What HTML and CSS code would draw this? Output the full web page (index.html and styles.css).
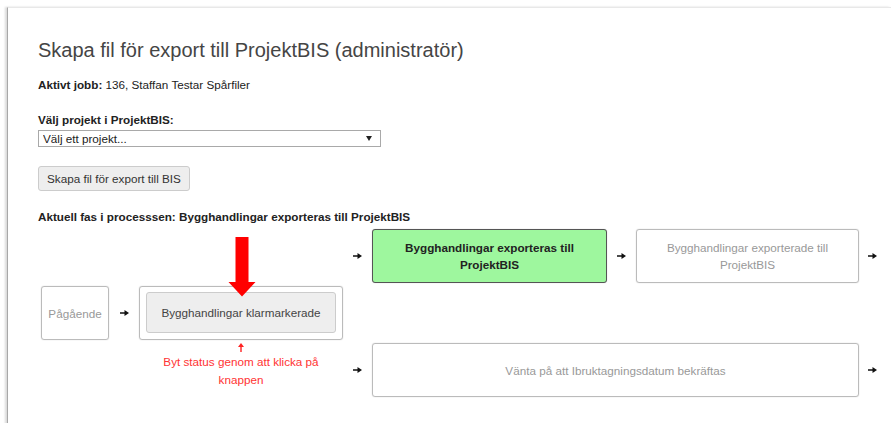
FILE: index.html
```html
<!DOCTYPE html>
<html lang="sv">
<head>
  <meta charset="UTF-8">
  <title>Skapa fil för export till ProjektBIS</title>
  <link rel="stylesheet" href="styles.css">
</head>
<body>
  <div class="frame">
    <h1>Skapa fil för export till ProjektBIS (administratör)</h1>

    <p class="job"><b>Aktivt jobb:</b> 136, Staffan Testar Spårfiler</p>

    <label class="lbl" for="projekt">Välj projekt i ProjektBIS:</label>
    <div class="select-wrap">
      <select id="projekt" class="sel">
        <option>Välj ett projekt...</option>
      </select>
    </div>

    <button type="button" class="bt">Skapa fil för export till BIS</button>

    <p class="phase">Aktuell fas i processsen: Bygghandlingar exporteras till ProjektBIS</p>

    <div class="flow">
      <div class="box start">Pågående</div>
      <div class="arr a1"><svg width="9" height="6" viewBox="0 0 9 6"><path d="M0 2.3h5v1.4H0z M4.5 0 9 3 4.5 6z" fill="#111"/></svg></div>
      <div class="mid">
        <svg class="bigarrow" width="28" height="60" viewBox="0 0 28 60"><path d="M7.5 0h13v45h7L14 59.5 0.5 45h7z" fill="#f00"/></svg>
        <button type="button" class="midbt">Bygghandlingar klarmarkerade</button>
      </div>
      <div class="hint">
        <svg width="6" height="9" viewBox="0 0 6 9"><path d="M3 0 6 4H3.7v5H2.3V4H0z" fill="#f22"/></svg>
        <span>Byt status genom att klicka på<br>knappen</span>
      </div>

      <div class="arr a2"><svg width="9" height="6" viewBox="0 0 9 6"><path d="M0 2.3h5v1.4H0z M4.5 0 9 3 4.5 6z" fill="#111"/></svg></div>
      <div class="box current">Bygghandlingar exporteras till ProjektBIS</div>
      <div class="arr a3"><svg width="9" height="6" viewBox="0 0 9 6"><path d="M0 2.3h5v1.4H0z M4.5 0 9 3 4.5 6z" fill="#111"/></svg></div>
      <div class="box done">Bygghandlingar exporterade till ProjektBIS</div>
      <div class="arr a4"><svg width="9" height="6" viewBox="0 0 9 6"><path d="M0 2.3h5v1.4H0z M4.5 0 9 3 4.5 6z" fill="#111"/></svg></div>

      <div class="arr a5"><svg width="9" height="6" viewBox="0 0 9 6"><path d="M0 2.3h5v1.4H0z M4.5 0 9 3 4.5 6z" fill="#111"/></svg></div>
      <div class="box wait">Vänta på att Ibruktagningsdatum bekräftas</div>
      <div class="arr a6"><svg width="9" height="6" viewBox="0 0 9 6"><path d="M0 2.3h5v1.4H0z M4.5 0 9 3 4.5 6z" fill="#111"/></svg></div>
    </div>
  </div>
</body>
</html>
```

FILE: styles.css
```css
body {
  margin: 0;
  background: #fff;
  font-family: "Liberation Sans", Arial, sans-serif;
  font-size: 11.7px;
  color: #222;
  overflow: hidden;
}
.frame {
  margin: 7px 0 0 7px;
  height: 405px;
  padding: 30px 0 0 30px;
  border-left: 1px solid #a8a8a8;
  border-top: 1px solid #e8e8e8;
  border-bottom: 1px solid #eee;
  box-shadow: -2px 0 2px rgba(0, 0, 0, 0.15);
}
h1 {
  margin: 0;
  font-size: 20px;
  line-height: 24px;
  font-weight: normal;
  color: #454545;
}
.job {
  margin: 16px 0 0;
  line-height: 14px;
}
.lbl {
  display: block;
  margin-top: 21px;
  line-height: 14px;
  font-weight: bold;
}
.select-wrap {
  position: relative;
  width: 343px;
  margin-top: 3px;
}
.sel {
  -webkit-appearance: none;
  appearance: none;
  display: block;
  width: 343px;
  height: 17px;
  margin: 0;
  padding: 0 4px;
  border: 1px solid #a9a9a9;
  border-radius: 0;
  background: #fff;
  font-family: inherit;
  font-size: 11.7px;
  color: #222;
}
.select-wrap::after {
  content: "";
  position: absolute;
  right: 9px;
  top: 6px;
  border-left: 3px solid transparent;
  border-right: 3px solid transparent;
  border-top: 5px solid #222;
}
.bt {
  display: block;
  margin-top: 19px;
  width: 152px;
  height: 25px;
  padding: 0;
  background: #eee;
  border: 1px solid #ccc;
  border-radius: 3px;
  font-family: inherit;
  font-size: 11.7px;
  color: #333;
}
.phase {
  margin: 19px 0 0;
  line-height: 14px;
  font-weight: bold;
}
.flow {
  display: grid;
  grid-template-columns: 68px 30px 204px 29px 235px 29px 223px 27px;
  grid-template-rows: 54px 54px 54px;
  row-gap: 3px;
  margin: 5px 0 0 3px;
}
.arr {
  display: flex;
  align-items: center;
  justify-content: center;
}
.arr svg {
  display: block;
}
.a1 { grid-column: 2; grid-row: 2; }
.a2 { grid-column: 4; grid-row: 1; }
.a3 { grid-column: 6; grid-row: 1; }
.a4 { grid-column: 8; grid-row: 1; }
.a5 { grid-column: 4; grid-row: 3; }
.a6 { grid-column: 8; grid-row: 3; }
.box {
  display: flex;
  align-items: center;
  justify-content: center;
  text-align: center;
  line-height: 17px;
  padding: 0 20px;
  border: 1px solid #bbb;
  border-radius: 3px;
  box-shadow: 0 0 1px #bbb;
  color: #999;
}
.start {
  grid-column: 1;
  grid-row: 2;
  padding: 0;
}
.current {
  grid-column: 5;
  grid-row: 1;
  background: #9ef79e;
  border-color: #555;
  font-weight: bold;
  color: #222;
}
.done {
  grid-column: 7;
  grid-row: 1;
}
.wait {
  grid-column: 5 / 8;
  grid-row: 3;
}
.mid {
  grid-column: 3;
  grid-row: 2;
  position: relative;
  padding: 5px 6px 6px;
  border: 1px solid #bbb;
  border-radius: 3px;
  box-shadow: 0 0 1px #bbb;
}
.midbt {
  display: block;
  width: 100%;
  height: 100%;
  padding: 0;
  background: #eee;
  border: 1px solid #ccc;
  border-radius: 3px;
  font-family: inherit;
  font-size: 11.7px;
  color: #444;
}
.bigarrow {
  position: absolute;
  left: 88px;
  top: -50px;
}
.hint {
  grid-column: 3;
  grid-row: 3;
  display: flex;
  flex-direction: column;
  align-items: center;
  text-align: center;
  line-height: 18px;
  color: #f33;
}
.hint svg {
  display: block;
  margin-bottom: 1px;
}
```
